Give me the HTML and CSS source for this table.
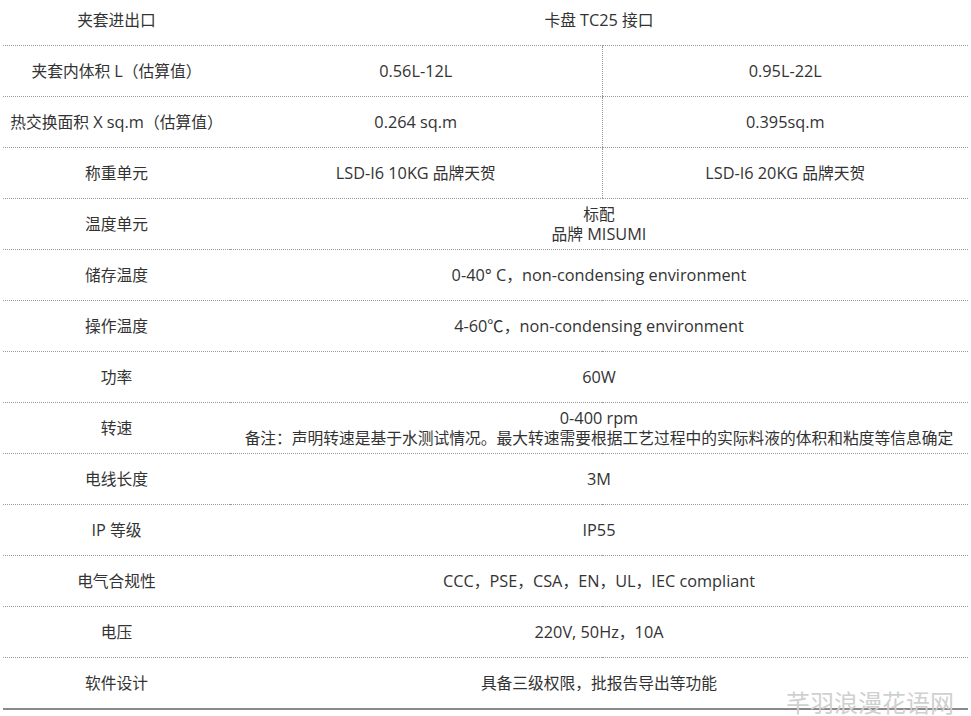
FILE: index.html
```html
<!DOCTYPE html>
<html lang="zh-CN">
<head>
<meta charset="utf-8">
<title>规格</title>
<link rel="stylesheet" href="styles.css">
</head>
<body>
<div class="wrap">
<table class="spec">
  <colgroup><col class="c1"><col class="c2"><col class="c3"></colgroup>
  <tr class="first"><td>夹套进出口</td><td colspan="2">卡盘 <span class="lat">TC25</span> 接口</td></tr>
  <tr><td>夹套内体积 <span class="lat">L</span>（估算值）</td><td class="lat">0.56L-12L</td><td class="split lat">0.95L-22L</td></tr>
  <tr><td>热交换面积 <span class="lat">X sq.m</span>（估算值）</td><td class="lat">0.264 sq.m</td><td class="split lat">0.395sq.m</td></tr>
  <tr><td>称重单元</td><td><span class="lat">LSD-I6 10KG</span> 品牌天贺</td><td class="split"><span class="lat">LSD-I6 20KG</span> 品牌天贺</td></tr>
  <tr><td>温度单元</td><td colspan="2">标配<br>品牌 <span class="lat">MISUMI</span></td></tr>
  <tr><td>储存温度</td><td colspan="2"><span class="lat">0-40° C</span>，<span class="lat">non-condensing environment</span></td></tr>
  <tr><td>操作温度</td><td colspan="2"><span class="lat">4-60℃</span>，<span class="lat">non-condensing environment</span></td></tr>
  <tr><td>功率</td><td colspan="2" class="lat">60W</td></tr>
  <tr><td>转速</td><td colspan="2"><span class="lat">0-400 rpm</span><br>备注：声明转速是基于水测试情况。最大转速需要根据工艺过程中的实际料液的体积和粘度等信息确定</td></tr>
  <tr><td>电线长度</td><td colspan="2" class="lat">3M</td></tr>
  <tr><td><span class="lat">IP</span> 等级</td><td colspan="2" class="lat">IP55</td></tr>
  <tr><td>电气合规性</td><td colspan="2"><span class="lat">CCC</span>，<span class="lat">PSE</span>，<span class="lat">CSA</span>，<span class="lat">EN</span>，<span class="lat">UL</span>，<span class="lat">IEC compliant</span></td></tr>
  <tr><td>电压</td><td colspan="2"><span class="lat">220V, 50Hz</span>，<span class="lat">10A</span></td></tr>
  <tr class="last"><td>软件设计</td><td colspan="2">具备三级权限，批报告导出等功能</td></tr>
</table>
<div class="mark">芊羽浪漫花语网</div>
</div>
</body>
</html>
```
FILE: styles.css
```css
html, body {
  margin: 0;
  padding: 0;
  background: #fff;
}
body {
  font-family: "Open Sans", "Noto Sans CJK SC", sans-serif;
  font-size: 15.75px;
  color: #333;
}
.wrap {
  position: relative;
  padding-left: 3px;
  width: 965px;
  height: 716px;
  overflow: hidden;
}
.spec {
  border-collapse: collapse;
  width: 965px;
  table-layout: fixed;
}
.c1 { width: 227px; }
.c2 { width: 372px; }
.c3 { width: 366px; }
.spec td {
  height: 50px;
  padding: 0;
  text-align: center;
  vertical-align: middle;
  line-height: 20px;
  border-bottom: 1px dotted #9a9a9a;
}
.lat {
  font-size: 16.3px;
}
.spec td.split {
  border-left: 1px dotted #9a9a9a;
}
.spec tr.first td {
  height: 45px;
  padding-bottom: 5px;
  box-sizing: border-box;
}
.spec tr.last td {
  border-bottom: 2px solid #8a8a8a;
}
.mark {
  position: absolute;
  right: 14px;
  bottom: 0;
  font-family: "Noto Sans CJK SC", sans-serif;
  font-size: 24px;
  line-height: 28px;
  color: #d0d0d0;
}
```
